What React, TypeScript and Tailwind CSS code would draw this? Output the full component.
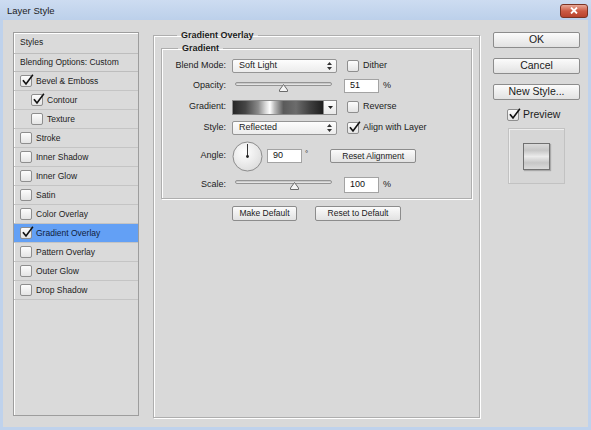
import React from 'react';

const FONT = "font-['Liberation_Sans',Arial,sans-serif]";

const Check = ({ checked }: { checked?: boolean }) => (
  <span className="relative block w-[12px] h-[12px] shrink-0 rounded-[2px] border border-[#8e8e8e] bg-gradient-to-b from-[#fdfdfd] to-[#e4e4e4]">
    {checked && (
      <svg className="absolute -top-[2px] left-[0px] w-[13px] h-[13px]" viewBox="0 0 13 13">
        <path d="M2.4 6.8 L5 10 L11.4 1.4" stroke="#111" strokeWidth="1.6" fill="none" strokeLinecap="square" />
      </svg>
    )}
  </span>
);

const Button = ({ label, className }: { label: string; className: string }) => (
  <div className={`flex items-center justify-center rounded-[2px] border border-[#8c8c8c] bg-gradient-to-b from-[#fbfbfb] to-[#e2e2e2] text-[#1a1a1a] ${className}`}>
    {label}
  </div>
);

const UpDown = () => (
  <svg className="w-[5px] h-[8px]" viewBox="0 0 5 8">
    <path d="M2.5 0 L5 3 L0 3 Z M2.5 8 L5 5 L0 5 Z" fill="#333" />
  </svg>
);

const Select = ({ value }: { value: string }) => (
  <div className="flex items-center justify-between w-[105px] h-[14px] pl-[6px] pr-[4px] rounded-[2px] border border-[#959595] bg-gradient-to-b from-[#fdfdfd] to-[#ececec]">
    <span>{value}</span>
    <UpDown />
  </div>
);

const Slider = ({ pos, h }: { pos: number; h: string }) => (
  <div className={`relative w-[105px] ${h}`}>
    <div className="absolute left-[3px] top-[3px] w-[97px] h-[4px] rounded-full border border-[#949494] bg-gradient-to-b from-[#bdbdbd] to-[#f0f0f0]" />
    <svg className="absolute top-[5px] w-[9px] h-[8px]" style={{ left: 3 + (97 * pos) / 100 - 4.5 }} viewBox="0 0 9 8">
      <path d="M4.5 0.5 L8.5 6 L8.5 7.5 L0.5 7.5 L0.5 6 Z" fill="#f4f4f4" stroke="#6a6a6a" strokeWidth="1" />
    </svg>
  </div>
);

const Input = ({ value, h }: { value: string; h: string }) => (
  <div className={`flex items-center w-[35px] ${h} pl-[5px] border border-[#a3a3a3] bg-white text-[#111]`}>{value}</div>
);

const items: { label: string; checked?: boolean; indent?: boolean; active?: boolean }[] = [
  { label: 'Bevel & Emboss', checked: true },
  { label: 'Contour', checked: true, indent: true },
  { label: 'Texture', indent: true },
  { label: 'Stroke' },
  { label: 'Inner Shadow' },
  { label: 'Inner Glow' },
  { label: 'Satin' },
  { label: 'Color Overlay' },
  { label: 'Gradient Overlay', checked: true, active: true },
  { label: 'Pattern Overlay' },
  { label: 'Outer Glow' },
  { label: 'Drop Shadow' },
];

export default function App() {
  return (
    <div className={`w-[591px] h-[430px] flex flex-col bg-[#bfd2ec] ${FONT} text-[#1c1c1c] overflow-hidden`}>
      {/* title bar */}
      <div className="h-[20px] shrink-0 flex items-center justify-between pl-[7px] pr-[3px] bg-gradient-to-b from-[#cddcf1] to-[#bcd0ea]">
        <span className="mt-[2px] text-[9.5px] text-[#1e1e1e]">Layer Style</span>
        <div className="w-[28px] h-[14px] mt-[1px] flex items-center justify-center rounded-[3px] border border-[#7b3323] bg-gradient-to-b from-[#e7a898] via-[#cc5a43] to-[#b8432d]">
          <svg className="w-[8px] h-[7px]" viewBox="0 0 8 7">
            <path d="M1 0.5 L7 6.5 M7 0.5 L1 6.5" stroke="#fff" strokeWidth="1.8" />
          </svg>
        </div>
      </div>

      {/* body */}
      <div className="flex-1 mx-[3px] mb-[3px] flex items-start bg-[#d9d9d9] pl-[10px]">
        {/* left list */}
        <div className="mt-[12px] w-[126px] h-[384px] border border-[#9d9d9d] shadow-[inset_1px_1px_0_#fff] bg-[#dadada] text-[8.5px]">
          <div className="h-[21px] flex items-center pl-[6px] pb-[2px] border-b border-[#bdbdbd]">Styles</div>
          <div className="h-[18px] flex items-center pl-[6px] border-b border-[#bdbdbd]">Blending Options: Custom</div>
          {items.map((it) => (
            <div
              key={it.label}
              className={`h-[19px] flex items-center gap-[4px] border-b border-[#c4c4c4] ${it.indent ? 'pl-[17px]' : 'pl-[6px]'} ${it.active ? 'bg-[#63a0f5] text-[#10203c]' : ''}`}
            >
              <Check checked={it.checked} />
              <span>{it.label}</span>
            </div>
          ))}
        </div>

        {/* center group */}
        <fieldset className="ml-[14px] mt-[9px] w-[327px] h-[389px] border border-[#aeaeae] shadow-[inset_1px_1px_0_#fff,1px_1px_0_#fff] px-[7px] pt-[1px] text-[9px]">
          <legend className="ml-[16px] px-[4px] font-bold leading-[12px]">Gradient Overlay</legend>
          <fieldset className="w-full border border-[#aeaeae] shadow-[inset_1px_1px_0_#fff,1px_1px_0_#fff] pt-[5px] pb-[5px]">
            <legend className="ml-[16px] px-[4px] font-bold leading-[12px]">Gradient</legend>
            <div className="flex flex-col gap-[6px]">
              <div className="flex items-center h-[14px]">
                <span className="w-[64px] text-right">Blend Mode:</span>
                <div className="ml-[6px]"><Select value="Soft Light" /></div>
                <div className="ml-[10px] flex items-center gap-[4px]"><Check /><span>Dither</span></div>
              </div>
              <div className="flex items-center h-[14px]">
                <span className="w-[64px] text-right">Opacity:</span>
                <div className="ml-[6px]"><Slider pos={50.5} h="h-[14px]" /></div>
                <div className="ml-[7px]"><Input value="51" h="h-[14px]" /></div>
                <span className="ml-[4px]">%</span>
              </div>
              <div className="flex items-center h-[16px]">
                <span className="w-[64px] text-right">Gradient:</span>
                <div className="ml-[6px] flex h-[15px] border border-[#8a8a8a]">
                  <div className="w-[90px] h-full bg-[linear-gradient(90deg,#262626_0%,#464646_14%,#8a8a8a_28%,#d6d6d6_36%,#ffffff_41%,#bdbdbd_46%,#5a5a5a_56%,#6c6c6c_70%,#3e3e3e_86%,#1e1e1e_100%)]" />
                  <div className="w-[13px] h-full flex items-center justify-center border-l border-[#8a8a8a] bg-gradient-to-b from-[#fdfdfd] to-[#e8e8e8]">
                    <svg className="w-[5px] h-[3px]" viewBox="0 0 5 3"><path d="M0 0 L5 0 L2.5 3 Z" fill="#222" /></svg>
                  </div>
                </div>
                <div className="ml-[10px] flex items-center gap-[4px]"><Check /><span>Reverse</span></div>
              </div>
              <div className="flex items-center h-[14px]">
                <span className="w-[64px] text-right">Style:</span>
                <div className="ml-[6px]"><Select value="Reflected" /></div>
                <div className="ml-[10px] flex items-center gap-[4px]"><Check checked /><span>Align with Layer</span></div>
              </div>
              <div className="flex items-center h-[30px]">
                <span className="w-[64px] text-right">Angle:</span>
                <svg className="ml-[6px] w-[31px] h-[31px]" viewBox="0 0 31 31">
                  <defs>
                    <radialGradient id="dial" cx="40%" cy="35%" r="70%">
                      <stop offset="0%" stopColor="#ffffff" />
                      <stop offset="100%" stopColor="#dcdcdc" />
                    </radialGradient>
                  </defs>
                  <circle cx="15.5" cy="15.5" r="14.5" fill="url(#dial)" stroke="#8c8c8c" strokeWidth="1" />
                  <line x1="15.5" y1="15.5" x2="15.5" y2="3" stroke="#333" strokeWidth="1" />
                  <circle cx="15.5" cy="15.5" r="1.4" fill="#222" />
                </svg>
                <div className="ml-[4px]"><Input value="90" h="h-[14px]" /></div>
                <span className="ml-[3px] self-start mt-[7px] text-[8px]">°</span>
                <Button label="Reset Alignment" className="ml-[22px] w-[86px] h-[14px] text-[8.5px]" />
              </div>
              <div className="flex items-center h-[16px]">
                <span className="w-[64px] text-right">Scale:</span>
                <div className="ml-[6px]"><Slider pos={61} h="h-[16px]" /></div>
                <div className="ml-[7px]"><Input value="100" h="h-[16px]" /></div>
                <span className="ml-[4px]">%</span>
              </div>
            </div>
          </fieldset>
          <div className="mt-[7px] flex justify-center gap-[18px] text-[8.5px]">
            <Button label="Make Default" className="w-[65px] h-[15px]" />
            <Button label="Reset to Default" className="w-[86px] h-[15px]" />
          </div>
        </fieldset>

        {/* right column */}
        <div className="ml-[13px] mt-[12px] w-[87px] flex flex-col text-[10.5px]">
          <Button label="OK" className="h-[16px] border-[#6f7f95]" />
          <Button label="Cancel" className="mt-[10px] h-[16px]" />
          <Button label="New Style..." className="mt-[10px] h-[16px]" />
          <div className="mt-[9px] ml-[14px] flex items-center gap-[4px] h-[12px]">
            <Check checked />
            <span>Preview</span>
          </div>
          <div className="mt-[7px] ml-[15px] w-[57px] h-[56px] flex items-center justify-center border border-[#c2c2c2] shadow-[inset_1px_1px_0_#eeeeee] bg-[#d6d6d6]">
            <div className="w-[27px] h-[27px] border border-[#707070] shadow-[1px_1px_1px_#a8a8a8] bg-[linear-gradient(180deg,#dadada_0%,#c6c6c6_25%,#ebebeb_50%,#c6c6c6_75%,#dadada_100%)]" />
          </div>
        </div>
      </div>
    </div>
  );
}
